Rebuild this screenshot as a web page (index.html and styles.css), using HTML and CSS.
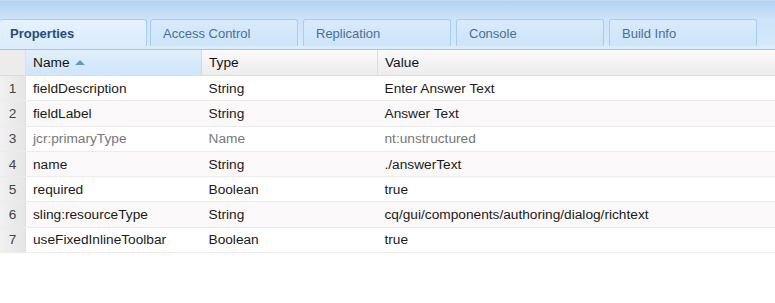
FILE: index.html
```html
<!DOCTYPE html>
<html lang="en">
<head>
    <meta charset="UTF-8">
    <meta name="viewport" content="width=device-width, initial-scale=1.0">
    <title>Properties</title>
    <link rel="stylesheet" href="styles.css">
</head>
<body>
    <div class="tabbar">
        <div class="tab active">Properties</div>
        <div class="tab">Access Control</div>
        <div class="tab">Replication</div>
        <div class="tab">Console</div>
        <div class="tab">Build Info</div>
    </div>
    <div class="tabline"></div>

    <table class="grid">
        <thead>
            <tr>
                <th class="num"></th>
                <th class="name sorted">Name <span class="arrow"></span></th>
                <th class="type">Type</th>
                <th class="value">Value</th>
            </tr>
        </thead>
        <tbody>
            <tr><td class="num">1</td><td>fieldDescription</td><td>String</td><td>Enter Answer Text</td></tr>
            <tr><td class="num">2</td><td>fieldLabel</td><td>String</td><td>Answer Text</td></tr>
            <tr class="protected"><td class="num">3</td><td>jcr:primaryType</td><td>Name</td><td>nt:unstructured</td></tr>
            <tr><td class="num">4</td><td>name</td><td>String</td><td>./answerText</td></tr>
            <tr><td class="num">5</td><td>required</td><td>Boolean</td><td>true</td></tr>
            <tr><td class="num">6</td><td>sling:resourceType</td><td>String</td><td>cq/gui/components/authoring/dialog/richtext</td></tr>
            <tr><td class="num">7</td><td>useFixedInlineToolbar</td><td>Boolean</td><td>true</td></tr>
        </tbody>
    </table>
</body>
</html>
```

FILE: styles.css
```css
body {
  margin: 0;
  background: #fff;
  font-family: "Liberation Sans", Arial, sans-serif;
  font-size: 13.7px;
  color: #222;
}

.tabbar {
  height: 45px;
  padding-top: 18px;
  box-sizing: border-box;
  display: flex;
  gap: 3px;
  background: linear-gradient(#b3d3f2, #cce3f9 40%, #d6e9fb);
  border-top: 1px solid #c3dcf4;
}

.tab {
  width: 148px;
  height: 27px;
  box-sizing: border-box;
  padding: 6px 0 0 12px;
  font-size: 13px;
  color: #4a6f96;
  background: linear-gradient(#d8ebfc, #cde4f9);
  border: 1px solid #a9cdee;
  border-bottom: none;
  border-radius: 3px 3px 0 0;
}

.tab + .tab {
  margin-left: 2px;
}

.tab.active {
  width: 147px;
  color: #1f4d7c;
  font-weight: bold;
  padding-left: 10px;
  background: linear-gradient(#e6f2fd, #dbecfb);
  border-left: none;
}

.tab:nth-child(2) {
  margin-left: 0;
}

.tabline {
  height: 4px;
  background: #dbecfb;
  border-bottom: 1px solid #9fc7ea;
}

.grid {
  width: 100%;
  border-collapse: collapse;
  table-layout: fixed;
}

.grid th {
  height: 25px;
  padding: 0 0 0 7px;
  text-align: left;
  font-weight: normal;
  color: #111;
  background: linear-gradient(#fafafa, #ececec);
  border-bottom: 1px solid #dcdcdc;
  border-right: 1px solid #ddd;
}

.grid th.num {
  width: 18px;
  background: #ececec;
  border-right: 1px solid #d4e4f2;
}

.grid th.name {
  width: 168px;
}

.grid th.type {
  width: 168px;
}

.grid th.sorted {
  background: linear-gradient(#e1effc, #cfe5fa);
  border-right: 1px solid #c9dcee;
}

.grid th.value {
  border-right: none;
}

.arrow {
  display: inline-block;
  width: 0;
  height: 0;
  margin-left: 2px;
  vertical-align: 2px;
  border-left: 5px solid transparent;
  border-right: 5px solid transparent;
  border-bottom: 5px solid #5b9bd5;
}

.grid td {
  height: 24.3px;
  padding: 0 0 0 7px;
  border-bottom: 1px solid #ebebeb;
  white-space: nowrap;
  color: #1a1a1a;
}

.grid td.num {
  padding: 0;
  text-align: center;
  color: #444;
  background: linear-gradient(90deg, #f0f0f0, #e6e6e6);
  border-right: 1px solid #d8e2ec;
}

.grid tbody tr:nth-child(even) td {
  background-color: #faf8f8;
}

.grid tbody tr:nth-child(even) td.num {
  background: linear-gradient(90deg, #f0f0f0, #e6e6e6);
}

.grid tr.protected td {
  color: #777;
}

.grid tr.protected td.num {
  color: #444;
}
```
